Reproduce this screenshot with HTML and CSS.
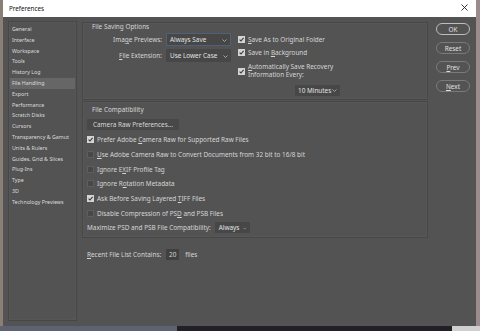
FILE: index.html
```html
<!DOCTYPE html>
<html>
<head>
<meta charset="utf-8">
<link rel="stylesheet" href="styles.css">
</head>
<body>
<div class="dialog">
  <div class="titlebar">
    <span class="title">Preferences</span>
    <span class="close">
      <svg width="7" height="7" viewBox="0 0 7 7"><path d="M0.5 0.5 L6.5 6.5 M6.5 0.5 L0.5 6.5" stroke="#222" stroke-width="0.9" fill="none"/></svg>
    </span>
  </div>
  <div class="body">
    <ul class="sidebar">
      <li>General</li>
      <li>Interface</li>
      <li>Workspace</li>
      <li>Tools</li>
      <li>History Log</li>
      <li class="selected">File Handling</li>
      <li>Export</li>
      <li>Performance</li>
      <li>Scratch Disks</li>
      <li>Cursors</li>
      <li>Transparency &amp; Gamut</li>
      <li>Units &amp; Rulers</li>
      <li>Guides, Grid &amp; Slices</li>
      <li>Plug-Ins</li>
      <li>Type</li>
      <li>3D</li>
      <li>Technology Previews</li>
    </ul>

    <div class="main">
      <section class="group saving">
        <div class="gtitle">File Saving Options</div>
        <div class="saving-content">
          <div class="fields">
            <div class="flabel">Ima<u>g</u>e Previews:</div>
            <div class="select focus wide"><span>Always Save</span><svg class="chev" width="5" height="3" viewBox="0 0 5 3"><path d="M0.5 0.5 L2.5 2.5 L4.5 0.5" stroke="#bbb" stroke-width="0.8" fill="none"/></svg></div>
            <div class="flabel"><u>F</u>ile Extension:</div>
            <div class="select wide"><span>Use Lower Case</span><svg class="chev" width="5" height="3" viewBox="0 0 5 3"><path d="M0.5 0.5 L2.5 2.5 L4.5 0.5" stroke="#bbb" stroke-width="0.8" fill="none"/></svg></div>
          </div>
          <div class="checks">
            <div class="crow r1"><span class="cb on"><svg width="7" height="7" viewBox="0 0 7 7"><path d="M1.6 3.6 L3 5 L5.6 1.9" stroke="#3a3a3a" stroke-width="1.1" fill="none"/></svg></span><span><u>S</u>ave As to Original Folder</span></div>
            <div class="crow r2"><span class="cb on"><svg width="7" height="7" viewBox="0 0 7 7"><path d="M1.6 3.6 L3 5 L5.6 1.9" stroke="#3a3a3a" stroke-width="1.1" fill="none"/></svg></span><span>Save in <u>B</u>ackground</span></div>
            <div class="crow r3"><span class="cb on"><svg width="7" height="7" viewBox="0 0 7 7"><path d="M1.6 3.6 L3 5 L5.6 1.9" stroke="#3a3a3a" stroke-width="1.1" fill="none"/></svg></span><span class="two"><u>A</u>utomatically Save Recovery<br>Information Every:</span></div>
            <div class="select minutes"><span>10 Minutes</span><svg class="chev" width="5" height="3" viewBox="0 0 5 3"><path d="M0.5 0.5 L2.5 2.5 L4.5 0.5" stroke="#bbb" stroke-width="0.8" fill="none"/></svg></div>
          </div>
        </div>
      </section>

      <section class="group compat">
        <div class="gtitle">File Compatibility</div>
        <div class="compat-content">
          <div class="btn-flat">Camera Raw Preferences...</div>
          <div class="list">
            <div class="lrow"><span class="cb on"><svg width="7" height="7" viewBox="0 0 7 7"><path d="M1.6 3.6 L3 5 L5.6 1.9" stroke="#3a3a3a" stroke-width="1.1" fill="none"/></svg></span><span>Prefer Adobe <u>C</u>amera Raw for Supported Raw Files</span></div>
            <div class="lrow"><span class="cb"></span><span><u>U</u>se Adobe Camera Raw to Convert Documents from 32 bit to 16/8 bit</span></div>
            <div class="lrow"><span class="cb"></span><span>Ignore E<u>X</u>IF Profile Tag</span></div>
            <div class="lrow"><span class="cb"></span><span>Ignore R<u>o</u>tation Metadata</span></div>
            <div class="lrow"><span class="cb on"><svg width="7" height="7" viewBox="0 0 7 7"><path d="M1.6 3.6 L3 5 L5.6 1.9" stroke="#3a3a3a" stroke-width="1.1" fill="none"/></svg></span><span>Ask Before Saving Layered <u>T</u>IFF Files</span></div>
            <div class="lrow"><span class="cb"></span><span>Disable Compression of PS<u>D</u> and PSB Files</span></div>
            <div class="lrow plain"><span>Maximize PSD and PSB File Compatibility:</span><div class="select always"><span>Always</span><svg class="chev" width="5" height="3" viewBox="0 0 5 3"><path d="M0.5 0.5 L2.5 2.5 L4.5 0.5" stroke="#bbb" stroke-width="0.8" fill="none"/></svg></div></div>
          </div>
        </div>
      </section>

      <div class="recent">
        <span><u>R</u>ecent File List Contains:</span>
        <span class="num">20</span>
        <span>files</span>
      </div>
    </div>

    <div class="buttons">
      <div class="pill default">OK</div>
      <div class="pill">Reset</div>
      <div class="pill"><u>P</u>rev</div>
      <div class="pill"><u>N</u>ext</div>
    </div>
  </div>
</div>
</body>
</html>
```

FILE: styles.css
```css
html, body {
  margin: 0;
  padding: 0;
}
body {
  width: 480px;
  height: 331px;
  overflow: hidden;
  font-family: "Noto Sans", "Open Sans", sans-serif;
  background:
    linear-gradient(to right, #5d6172 0, #5d6172 177px, #221f27 177px, #221f27 452px, #cfcfcf 452px);
}
.dialog {
  margin-left: 3px;
  width: 473px;
  height: 326px;
  display: flex;
  flex-direction: column;
  background: #535353;
  box-shadow: -3px 0 0 #8a7f74, 4px 0 0 #9a8c8c;
}
.titlebar {
  height: 17px;
  background: #ffffff;
  display: flex;
  align-items: center;
  justify-content: space-between;
  padding: 0 6px 1px 6px;
  box-sizing: border-box;
}
.title {
  font-size: 6.3px;
  color: #111;
}
.close {
  display: flex;
  margin-right: 2px;
  margin-top: -2px;
}
.body {
  flex: 1;
  display: flex;
  padding: 4px 6px 0 5px;
  color: #d6d6d6;
  font-size: 6.4px;
}
u {
  text-decoration: underline;
  text-decoration-thickness: 0.6px;
  text-underline-offset: 1px;
}

/* sidebar */
.sidebar {
  list-style: none;
  margin: 0;
  padding: 2px 1px 0 1px;
  width: 69px;
  height: 300px;
  box-sizing: border-box;
  border: 1px solid #474747;
  box-shadow: inset 0 0 0 1px #575757;
  font-size: 5.3px;
}
.sidebar li {
  height: 10.8px;
  line-height: 10.8px;
  padding-left: 2px;
  white-space: nowrap;
  color: #dcdcdc;
}
.sidebar li.selected {
  background: #666666;
}

/* main */
.main {
  width: 346px;
  margin-left: 5px;
  margin-top: 1px;
  display: flex;
  flex-direction: column;
}
.group {
  border: 1px solid #474747;
  box-shadow: inset 0 0 0 1px #575757;
  box-sizing: border-box;
}
.gtitle {
  padding-left: 9px;
  line-height: 8px;
  white-space: nowrap;
}
.saving {
  height: 78px;
}
.saving-content {
  display: flex;
  align-items: flex-start;
  margin-top: 2px;
}
.fields {
  display: grid;
  grid-template-columns: 79px 65px;
  grid-auto-rows: 13px;
  column-gap: 4px;
  row-gap: 3px;
  align-items: center;
}
.flabel {
  text-align: right;
  white-space: nowrap;
}
.select {
  height: 13px;
  background: #474747;
  display: flex;
  align-items: center;
  justify-content: space-between;
  padding: 0 3px 0 4px;
  box-sizing: border-box;
  white-space: nowrap;
  color: #e2e2e2;
}
.select.focus {
  border: 1px solid #4f6079;
  padding-left: 3px;
}
.chev {
  margin-top: 1px;
}
.checks {
  margin-left: 7px;
  display: flex;
  flex-direction: column;
}
.crow {
  display: flex;
  align-items: center;
  white-space: nowrap;
}
.crow.r1 { height: 12px; }
.crow.r2 { height: 12px; margin-top: 1px; }
.crow.r3 { margin-top: 5px; align-items: center; }
.two {
  line-height: 8.4px;
}
.cb {
  width: 7px;
  height: 7px;
  box-sizing: border-box;
  flex: none;
  margin-right: 3px;
  border: 1px solid #5e5e5e;
  background: #484848;
  display: flex;
}
.cb.on {
  border: none;
  background: #d4d4d4;
}
.select.minutes {
  width: 45px;
  height: 11px;
  margin-left: 57px;
  margin-top: 5px;
  padding-left: 3px;
}

/* compat */
.compat {
  margin-top: 1px;
  height: 137px;
}
.compat .gtitle {
  margin-top: 4px;
}
.compat-content {
  padding-left: 4px;
  display: flex;
  flex-direction: column;
  align-items: flex-start;
}
.btn-flat {
  margin-top: 5px;
  width: 92px;
  height: 11px;
  line-height: 11px;
  background: #484848;
  padding-left: 6px;
  box-sizing: border-box;
  white-space: nowrap;
}
.list {
  margin-top: 2.5px;
  display: flex;
  flex-direction: column;
}
.lrow {
  height: 14.65px;
  display: flex;
  align-items: center;
  white-space: nowrap;
}
.lrow.plain span:first-child {
  margin-right: 4px;
}
.select.always {
  width: 35px;
  height: 11px;
  padding-left: 4px;
}

/* recent */
.recent {
  margin-top: 11px;
  padding-left: 5px;
  display: flex;
  align-items: center;
  height: 11px;
  white-space: nowrap;
}
.num {
  margin-left: 5px;
  width: 13px;
  height: 11px;
  line-height: 11px;
  background: #404040;
  text-align: center;
  margin-right: 6px;
}

/* buttons */
.buttons {
  margin-left: 8px;
  margin-top: 2px;
  display: flex;
  flex-direction: column;
  gap: 7px;
}
.pill {
  width: 34px;
  height: 12px;
  box-sizing: border-box;
  border: 1px solid #7a7a7a;
  border-radius: 6px;
  display: flex;
  align-items: center;
  justify-content: center;
  font-size: 6.4px;
  color: #e0e0e0;
}
.pill.default {
  border: 1.3px solid #bdbdbd;
}
```
